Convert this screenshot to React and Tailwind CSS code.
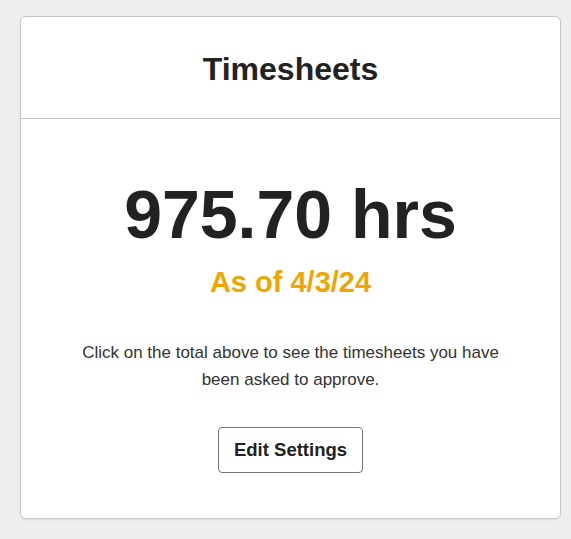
import React from "react";

const TimesheetsCard = ({ total, asOf, onEdit }) => {
  return (
    <div className="w-[541px] bg-white border border-[#c6c6c6] rounded-[6px] shadow-[0_1px_2px_rgba(0,0,0,0.08)]">
      <div className="h-[102px] border-b border-[#c8c8c8] flex items-center justify-center pt-[3px]">
        <h2 className="text-[32px] leading-none font-bold text-[#222222]">Timesheets</h2>
      </div>

      <div className="flex flex-col items-center pt-[61px] pb-[45px]">
        <a className="text-[68px] leading-none font-bold text-[#222222] cursor-pointer">
          {total} hrs
        </a>
        <p className="mt-[20px] text-[29px] leading-none font-bold text-[#f0a500]">
          As of {asOf}
        </p>
        <p className="mt-[42px] max-w-[440px] text-center text-[17px] leading-[27px] text-[#333333]">
          Click on the total above to see the timesheets you have been asked to approve.
        </p>
        <button
          type="button"
          onClick={onEdit}
          className="mt-[34px] h-[46px] px-[15px] border border-[#767676] rounded-[4px] bg-white text-[18.5px] font-bold text-[#222222] leading-none"
        >
          Edit Settings
        </button>
      </div>
    </div>
  );
};

export default function App() {
  return (
    <div
      className="min-h-screen bg-[#efeff1] pl-5 pt-4 pb-5"
      style={{ fontFamily: '"Liberation Sans", Arial, sans-serif' }}
    >
      <TimesheetsCard total="975.70" asOf="4/3/24" onEdit={() => {}} />
    </div>
  );
}
